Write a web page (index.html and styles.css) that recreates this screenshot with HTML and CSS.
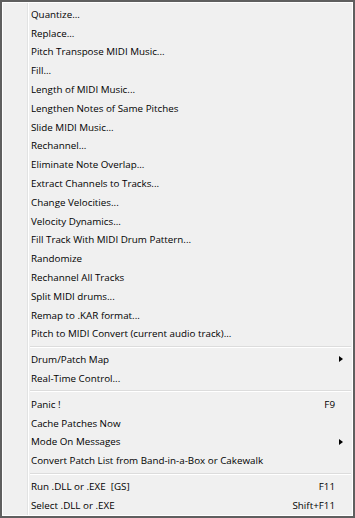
FILE: index.html
```html
<!DOCTYPE html>
<html lang="en">
<head>
  <meta charset="UTF-8"/>
  <title>MIDI Menu</title>
  <link rel="stylesheet" href="styles.css">
</head>
<body>

  <div class="menu">
    <div class="menu-item"><span class="label">Quantize...</span></div>
    <div class="menu-item"><span class="label">Replace...</span></div>
    <div class="menu-item"><span class="label">Pitch Transpose MIDI Music...</span></div>
    <div class="menu-item"><span class="label">Fill...</span></div>
    <div class="menu-item"><span class="label">Length of MIDI Music...</span></div>
    <div class="menu-item"><span class="label">Lengthen Notes of Same Pitches</span></div>
    <div class="menu-item"><span class="label">Slide MIDI Music...</span></div>
    <div class="menu-item"><span class="label">Rechannel...</span></div>
    <div class="menu-item"><span class="label">Eliminate Note Overlap...</span></div>
    <div class="menu-item"><span class="label">Extract Channels to Tracks...</span></div>
    <div class="menu-item"><span class="label">Change Velocities...</span></div>
    <div class="menu-item"><span class="label">Velocity Dynamics...</span></div>
    <div class="menu-item"><span class="label">Fill Track With MIDI Drum Pattern...</span></div>
    <div class="menu-item"><span class="label">Randomize</span></div>
    <div class="menu-item"><span class="label">Rechannel All Tracks</span></div>
    <div class="menu-item"><span class="label">Split MIDI drums...</span></div>
    <div class="menu-item"><span class="label">Remap to .KAR format...</span></div>
    <div class="menu-item"><span class="label">Pitch to MIDI Convert (current audio track)...</span></div>

    <div class="menu-sep"></div>

    <div class="menu-item"><span class="label">Drum/Patch Map</span><span class="arrow"></span></div>
    <div class="menu-item"><span class="label">Real-Time Control...</span></div>

    <div class="menu-sep"></div>

    <div class="menu-item"><span class="label">Panic !</span><span class="key">F9</span></div>
    <div class="menu-item"><span class="label">Cache Patches Now</span></div>
    <div class="menu-item"><span class="label">Mode On Messages</span><span class="arrow"></span></div>
    <div class="menu-item"><span class="label">Convert Patch List from Band-in-a-Box or Cakewalk</span></div>

    <div class="menu-sep"></div>

    <div class="menu-item"><span class="label">Run .DLL or .EXE&nbsp;&nbsp;[GS]</span><span class="key">F11</span></div>
    <div class="menu-item"><span class="label">Select .DLL or .EXE</span><span class="key">Shift+F11</span></div>
  </div>

</body>
</html>
```

FILE: styles.css
```css
body {
  margin: 0;
  background: #ffffff;
}

.menu {
  box-sizing: border-box;
  width: 355px;
  height: 518px;
  border: 2px solid #5f5f5f;
  box-shadow: inset 1px 1px 0 #ffffff, inset -1px -1px 0 #ffffff;
  /* gutter line on the left, like the classic win7 menu */
  background:
    linear-gradient(to right, transparent 25px, #e2e3e3 25px, #e2e3e3 26px, #ffffff 26px, #ffffff 27px, transparent 27px),
    #f0f0f0;
  padding-top: 3px;
  font-family: 'Open Sans', 'Noto Sans', sans-serif;
  font-size: 9.8px;
  color: #000;
}

.menu-item {
  height: 18.8px;
  display: flex;
  align-items: center;
  padding-left: 29px;
  padding-right: 18px;
  position: relative;
}

.menu-item .label {
  flex: 1;
  white-space: nowrap;
}

.menu-item .key {
  white-space: nowrap;
}

.menu-item .arrow {
  position: absolute;
  right: 10px;
  top: 6px;
  width: 0;
  height: 0;
  border-top: 3.5px solid transparent;
  border-bottom: 3.5px solid transparent;
  border-left: 4px solid #000;
}

.menu-sep {
  height: 7px;
  margin-left: 28px;
  margin-right: 2px;
  display: flex;
  flex-direction: column;
  justify-content: center;
}

.menu-sep::before {
  content: "";
  display: block;
  height: 1px;
  background: #dcdcdc;
  border-bottom: 1px solid #ffffff;
}
```
